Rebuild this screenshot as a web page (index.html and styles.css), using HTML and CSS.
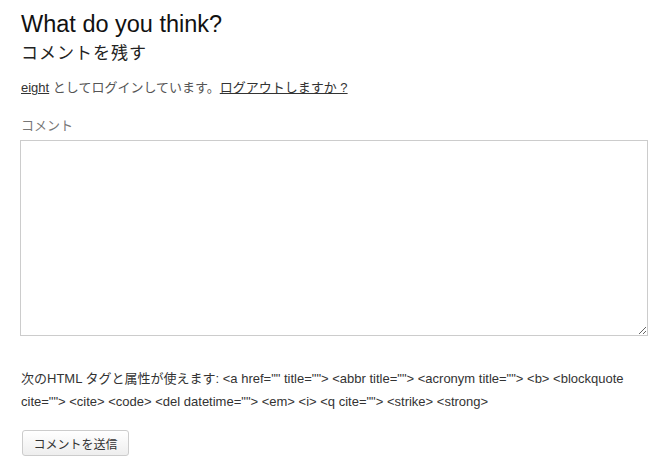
FILE: index.html
```html
<!DOCTYPE html>
<html lang="ja">
<head>
<meta charset="utf-8">
<link rel="stylesheet" href="styles.css">
</head>
<body>
<div class="respond">
  <h2 class="title">What do you think?</h2>
  <h3 class="reply-title">コメントを残す</h3>
  <form class="comment-form">
    <p class="logged-in"><a href="#">eight</a> としてログインしています。<a href="#">ログアウトしますか ?</a></p>
    <p class="comment-field">
      <label class="label" for="comment">コメント</label>
      <textarea id="comment" class="textarea"></textarea>
    </p>
    <p class="allowed-tags">次のHTML タグと属性が使えます: &lt;a href="" title=""&gt; &lt;abbr title=""&gt; &lt;acronym title=""&gt; &lt;b&gt; &lt;blockquote cite=""&gt; &lt;cite&gt; &lt;code&gt; &lt;del datetime=""&gt; &lt;em&gt; &lt;i&gt; &lt;q cite=""&gt; &lt;strike&gt; &lt;strong&gt;</p>
    <p class="submit-row"><button type="button" class="submit">コメントを送信</button></p>
  </form>
</div>
</body>
</html>
```
FILE: styles.css
```css
html, body {
  margin: 0;
  padding: 0;
  background: #fff;
}
body {
  font-family: "Liberation Sans", "Noto Sans CJK JP", sans-serif;
  color: #444;
}
.respond {
  padding: 10px 15px 0 21px;
}
.title {
  margin: 0;
  font-size: 23.5px;
  font-weight: normal;
  color: #111;
  line-height: 28px;
}
.reply-title {
  margin: 0;
  padding-top: 4px;
  font-size: 17px;
  font-weight: normal;
  color: #222;
  line-height: 24px;
  letter-spacing: 1px;
}
.comment-form p {
  margin: 0;
}
.logged-in {
  font-size: 13px;
  line-height: 20px;
  padding-top: 12px;
  color: #555;
}
.logged-in a {
  color: #333;
  text-decoration: underline;
}
.comment-field {
  padding-top: 20px;
}
.label {
  display: block;
  font-size: 13px;
  line-height: 16px;
  color: #777;
  margin-bottom: 6px;
}
.textarea {
  display: block;
  box-sizing: border-box;
  width: 628px;
  height: 196px;
  margin-left: -1px;
  border: 1px solid #ccc;
  resize: vertical;
}
.allowed-tags {
  padding-top: 31px;
  font-size: 13px;
  line-height: 23px;
  color: #333;
}
.submit-row {
  padding-top: 17px;
}
.submit {
  font-family: "Liberation Sans", "Noto Sans CJK JP", sans-serif;
  font-size: 12px;
  color: #333;
  background: linear-gradient(#fff, #eee);
  border: 1px solid #ccc;
  border-radius: 3px;
  width: 107px;
  height: 26px;
  padding: 0;
  margin-left: 1px;
}
```
